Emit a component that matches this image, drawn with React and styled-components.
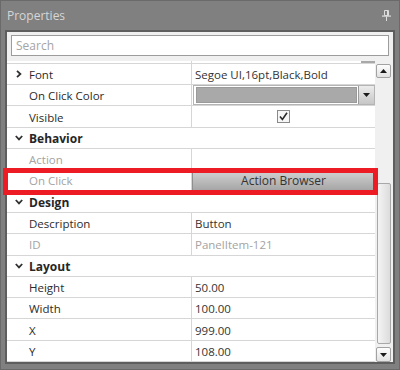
import React from "react";
import styled, { createGlobalStyle } from "styled-components";

const GlobalStyle = createGlobalStyle`
  html, body {
    margin: 0;
    padding: 0;
    background: #808080;
  }
  * {
    box-sizing: border-box;
  }
`;

const Window = styled.div`
  width: 400px;
  height: 370px;
  background: #808080;
  border: 1px solid #6a6a6a;
  display: flex;
  flex-direction: column;
  font-family: "Open Sans", "Noto Sans", sans-serif;
  font-size: 11.5px;
`;

const TitleBar = styled.div`
  height: 29px;
  display: flex;
  align-items: center;
  justify-content: space-between;
  padding: 0 8px 0 6px;
  color: #d6d6d6;
  font-size: 12px;
`;

const Panel = styled.div`
  flex: 1;
  margin: 0 4px 5px 4px;
  border: 2px solid #5e5e5e;
  background: #f0f0f0;
  display: flex;
  flex-direction: column;
`;

const SearchArea = styled.div`
  padding: 3px 4px 5px 4px;
`;

const SearchBox = styled.div`
  height: 21px;
  border: 1px solid #9c9c9c;
  background: #fff;
  color: #a4a4a4;
  padding: 1px 0 0 4px;
  display: flex;
  align-items: center;
  font-size: 12px;
`;

const Grid = styled.div`
  flex: 1;
  display: flex;
  background: #fff;
`;

const Rows = styled.div`
  flex: 1;
  display: flex;
  flex-direction: column;
`;

const Row = styled.div`
  position: relative;
  height: ${(p) => (p.$stub ? "3px" : "21.3px")};
  display: grid;
  grid-template-columns: 184px 1fr;
  border-bottom: 1px solid #d6d6d6;
`;

const HeaderRow = styled.div`
  height: 21.3px;
  display: flex;
  align-items: center;
  padding-top: 1px;
  border-bottom: 1px solid #d6d6d6;
  font-weight: 700;
  font-size: 12px;
  color: #262626;
`;

const Chevron = styled.span`
  width: 22px;
  display: flex;
  justify-content: center;
  align-items: center;
  padding-left: 1px;
`;

const Name = styled.div`
  display: flex;
  align-items: center;
  padding-top: 1px;
  padding-left: ${(p) => (p.$expander ? "0" : "22px")};
  color: ${(p) => (p.$disabled ? "#a3a3a3" : "#2b2b2b")};
  white-space: nowrap;
  overflow: hidden;
`;

const Value = styled.div`
  display: flex;
  align-items: center;
  justify-content: ${(p) => (p.$center ? "center" : "flex-start")};
  padding-top: ${(p) => (p.$flush ? "0" : "1px")};
  padding-left: ${(p) => (p.$flush ? "0" : "3px")};
  border-left: 1px solid #d6d6d6;
  color: ${(p) => (p.$disabled ? "#a3a3a3" : "#333")};
  white-space: nowrap;
  overflow: hidden;
`;

const StubDrop = styled.div`
  margin-left: auto;
  width: 14px;
  height: 2px;
  background: #a8a8a8;
`;

const ComboBox = styled.div`
  flex: 1;
  height: 20px;
  margin-left: 1px;
  display: flex;
  border: 1px solid #b4b4b4;
  background: #fff;
`;

const Swatch = styled.div`
  flex: 1;
  margin: 1px 1px 1px 2px;
  background: ${(p) => p.$color};
  border: 1px solid #9a9a9a;
`;

const DropButton = styled.div`
  width: 16px;
  display: flex;
  align-items: center;
  justify-content: center;
  border-left: 1px solid #9a9a9a;
  background: linear-gradient(#ececec, #c6c6c6);
`;

const CheckBox = styled.div`
  width: 13px;
  height: 13px;
  border: 1px solid #8a8a8a;
  background: #f6f6f6;
  display: flex;
  align-items: center;
  justify-content: center;
`;

const ActionButton = styled.div`
  flex: 1;
  height: 100%;
  display: flex;
  align-items: center;
  justify-content: center;
  padding-top: 1px;
  background: linear-gradient(#d2d2d2, #a6a6a6);
  border: 1px solid #8e8e8e;
  color: #333;
  font-size: 12px;
`;

const Highlight = styled.div`
  position: absolute;
  left: -4px;
  right: -3px;
  top: -2px;
  bottom: -4px;
  border: 5px solid #ed1c24;
  pointer-events: none;
`;

const ScrollBar = styled.div`
  width: 18px;
  background: #f0f0f0;
  display: flex;
  flex-direction: column;
  padding: 3px 2px 0 1px;
`;

const ScrollButton = styled.div`
  height: ${(p) => p.$h}px;
  border: 1px solid #a2a2a2;
  border-radius: 2px;
  background: linear-gradient(#fdfdfd, #e2e2e2);
  display: flex;
  align-items: center;
  justify-content: center;
`;

const Track = styled.div`
  flex: 1;
  display: flex;
  flex-direction: column;
  padding: 0 0 3px 1px;
`;

const Thumb = styled.div`
  margin-top: ${(p) => p.$offset}px;
  flex: 1;
  border: 1px solid #a8a8a8;
  border-radius: 2px;
  background: linear-gradient(90deg, #f4f4f4, #dcdcdc);
`;

const PinIcon = () => (
  <svg width="9" height="11" viewBox="0 0 9 11">
    <path d="M2.5 0.5h4v5h-4z" fill="none" stroke="#dcdcdc" />
    <rect x="5" y="1" width="1.5" height="4.5" fill="#dcdcdc" />
    <rect x="0" y="5.5" width="9" height="1.2" fill="#dcdcdc" />
    <rect x="4" y="6.5" width="1" height="4.5" fill="#dcdcdc" />
  </svg>
);

const ChevronRight = () => (
  <svg width="6" height="8" viewBox="0 0 6 8">
    <path d="M1 0.8L4.4 4L1 7.2" fill="none" stroke="#303030" strokeWidth="1.8" />
  </svg>
);

const ChevronDown = () => (
  <svg width="8" height="6" viewBox="0 0 8 6">
    <path d="M0.8 1L4 4.4L7.2 1" fill="none" stroke="#303030" strokeWidth="1.8" />
  </svg>
);

const Triangle = ({ up }) => (
  <svg width="7" height="4" viewBox="0 0 7 4">
    <path d={up ? "M0 4L3.5 0L7 4z" : "M0 0L7 0L3.5 4z"} fill="#1a1a1a" />
  </svg>
);

const CheckMark = () => (
  <svg width="9" height="9" viewBox="0 0 9 9">
    <path d="M1 4.5L3.4 7.5L8 0.8" fill="none" stroke="#2a2a2a" strokeWidth="1.6" />
  </svg>
);

const Header = ({ children }) => (
  <HeaderRow>
    <Chevron>
      <ChevronDown />
    </Chevron>
    {children}
  </HeaderRow>
);

const Prop = ({ name, value, disabled }) => (
  <Row>
    <Name $disabled={disabled}>{name}</Name>
    <Value $disabled={disabled}>{value}</Value>
  </Row>
);

export default function App() {
  return (
    <>
      <GlobalStyle />
      <Window>
        <TitleBar>
          <span>Properties</span>
          <PinIcon />
        </TitleBar>
        <Panel>
          <SearchArea>
            <SearchBox>Search</SearchBox>
          </SearchArea>
          <Grid>
            <Rows>
              <Row $stub>
                <Name />
                <Value $flush>
                  <StubDrop />
                </Value>
              </Row>
              <Row>
                <Name $expander>
                  <Chevron>
                    <ChevronRight />
                  </Chevron>
                  Font
                </Name>
                <Value>Segoe UI,16pt,Black,Bold</Value>
              </Row>
              <Row>
                <Name>On Click Color</Name>
                <Value $flush>
                  <ComboBox>
                    <Swatch $color="#a9a9a9" />
                    <DropButton>
                      <Triangle />
                    </DropButton>
                  </ComboBox>
                </Value>
              </Row>
              <Row>
                <Name>Visible</Name>
                <Value $center $flush>
                  <CheckBox>
                    <CheckMark />
                  </CheckBox>
                </Value>
              </Row>
              <Header>Behavior</Header>
              <Prop name="Action" value="" disabled />
              <Row>
                <Name $disabled>On Click</Name>
                <Value $flush>
                  <ActionButton>Action Browser</ActionButton>
                </Value>
                <Highlight />
              </Row>
              <Header>Design</Header>
              <Prop name="Description" value="Button" />
              <Prop name="ID" value="PanelItem-121" disabled />
              <Header>Layout</Header>
              <Prop name="Height" value="50.00" />
              <Prop name="Width" value="100.00" />
              <Prop name="X" value="999.00" />
              <Prop name="Y" value="108.00" />
            </Rows>
            <ScrollBar>
              <ScrollButton $h={14}>
                <Triangle up />
              </ScrollButton>
              <Track>
                <Thumb $offset={105} />
              </Track>
              <ScrollButton $h={15}>
                <Triangle />
              </ScrollButton>
            </ScrollBar>
          </Grid>
        </Panel>
      </Window>
    </>
  );
}
